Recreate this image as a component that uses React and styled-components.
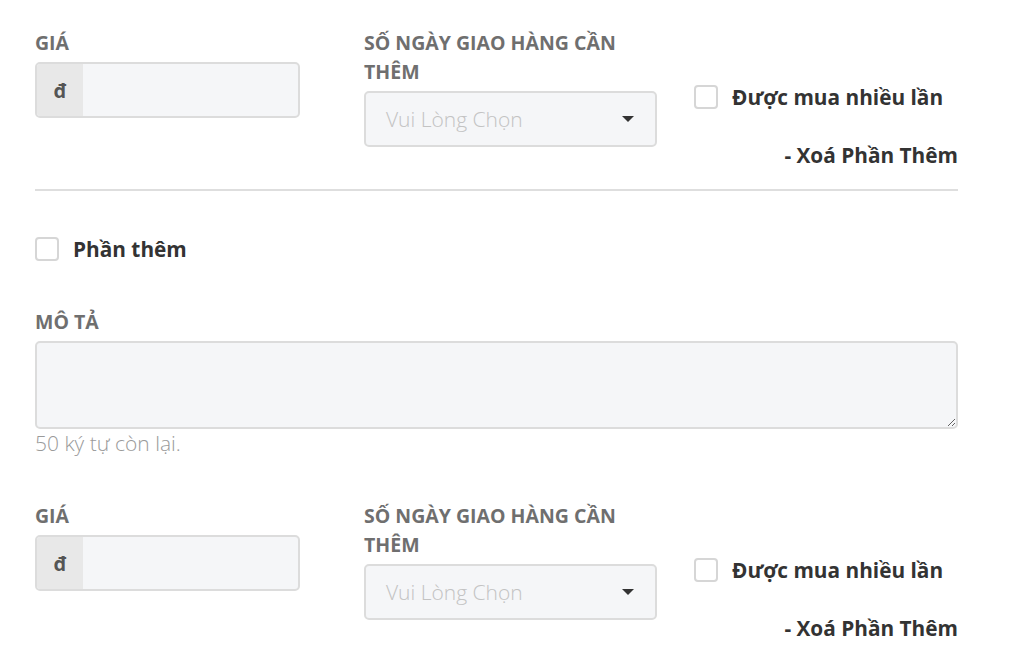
import React from 'react';
import styled, { createGlobalStyle } from 'styled-components';

const GlobalStyle = createGlobalStyle`
  body {
    margin: 0;
    background: #ffffff;
    font-family: 'Open Sans', 'Noto Sans', sans-serif;
  }
`

const Page = styled.div`
  width: 923px;
  padding: 28px 0 0 35px;
`

const OptionRow = styled.div`
  display: grid;
  grid-template-columns: 329px 330px 1fr;
`

const Field = styled.div`
  display: flex;
  flex-direction: column;
  width: ${props => props.width};
`

const Label = styled.div`
  font-size: 19.5px;
  line-height: 29px;
  font-weight: 700;
  color: #6f6f6f;
  text-transform: uppercase;
  margin-bottom: 5px;
`

const PriceBox = styled.div`
  display: flex;
  height: 56px;
  border: 2px solid #dcdcdc;
  border-radius: 5px;
  background: #f5f6f8;
  box-sizing: border-box;
  overflow: hidden;
`

const Prefix = styled.div`
  width: 46px;
  flex-shrink: 0;
  display: flex;
  align-items: center;
  justify-content: center;
  background: #e8e8e8;
  font-size: 20px;
  font-weight: 700;
  color: #555;
`

const PriceInput = styled.input`
  flex: 1;
  min-width: 0;
  border: none;
  outline: none;
  background: transparent;
  font-family: inherit;
  font-size: 20px;
  padding: 0 14px;
`

const SelectBox = styled.div`
  height: 56px;
  border: 2px solid #dcdcdc;
  border-radius: 5px;
  background: #f5f6f8;
  box-sizing: border-box;
  display: flex;
  align-items: center;
  justify-content: space-between;
  padding: 0 20px 0 20px;
  font-size: 21px;
  font-weight: 300;
  color: #c3c3c3;
`

const Caret = styled.span`
  width: 0;
  height: 0;
  border-left: 6px solid transparent;
  border-right: 6px solid transparent;
  border-top: 6px solid #333;
  margin-right: 1px;
`

const SideColumn = styled.div`
  display: flex;
  flex-direction: column;
  padding-top: 54px;
`

const CheckRow = styled.label`
  display: flex;
  align-items: center;
  gap: 14px;
  height: 30px;
  font-size: 20.8px;
  font-weight: 700;
  color: #333;
  cursor: pointer;
`

const CheckBox = styled.span`
  width: 24px;
  height: 24px;
  box-sizing: border-box;
  border: 2px solid #d6d6d6;
  border-radius: 4px;
  background: #fff;
  flex-shrink: 0;
`

const RemoveLink = styled.div`
  align-self: flex-end;
  margin-top: 29px;
  font-size: 20.8px;
  line-height: 29px;
  font-weight: 700;
  color: #333;
  cursor: pointer;
`

const Divider = styled.hr`
  border: none;
  border-top: 2px solid #dedede;
  margin: 19px 0 0;
`

const ExtraRow = styled.div`
  margin-top: 43px;
`

const DescSection = styled.div`
  margin-top: 43px;
  display: flex;
  flex-direction: column;
`

const DescArea = styled.textarea`
  height: 88px;
  border: 2px solid #dcdcdc;
  border-radius: 5px;
  background: #f5f6f8;
  box-sizing: border-box;
  resize: vertical;
  outline: none;
  font-family: inherit;
  font-size: 18px;
  margin: 0;
`

const Hint = styled.div`
  font-size: 21px;
  line-height: 26px;
  font-weight: 300;
  color: #9a9a9a;
  margin-top: 1px;
`

const NextBlock = styled.div`
  margin-top: 45px;
`

function OptionFields() {
  return (
    <OptionRow>
      <Field width="265px">
        <Label>Giá</Label>
        <PriceBox>
          <Prefix>đ</Prefix>
          <PriceInput />
        </PriceBox>
      </Field>
      <Field width="293px">
        <Label>Số ngày giao hàng cần thêm</Label>
        <SelectBox>
          Vui Lòng Chọn
          <Caret />
        </SelectBox>
      </Field>
      <SideColumn>
        <CheckRow>
          <CheckBox />
          Được mua nhiều lần
        </CheckRow>
        <RemoveLink>- Xoá Phần Thêm</RemoveLink>
      </SideColumn>
    </OptionRow>
  )
}

export default function App() {
  return (
    <Page>
      <GlobalStyle />
      <OptionFields />
      <Divider />
      <ExtraRow>
        <CheckRow>
          <CheckBox />
          Phần thêm
        </CheckRow>
      </ExtraRow>
      <DescSection>
        <Label>Mô tả</Label>
        <DescArea />
        <Hint>50 ký tự còn lại.</Hint>
      </DescSection>
      <NextBlock>
        <OptionFields />
      </NextBlock>
    </Page>
  )
}
